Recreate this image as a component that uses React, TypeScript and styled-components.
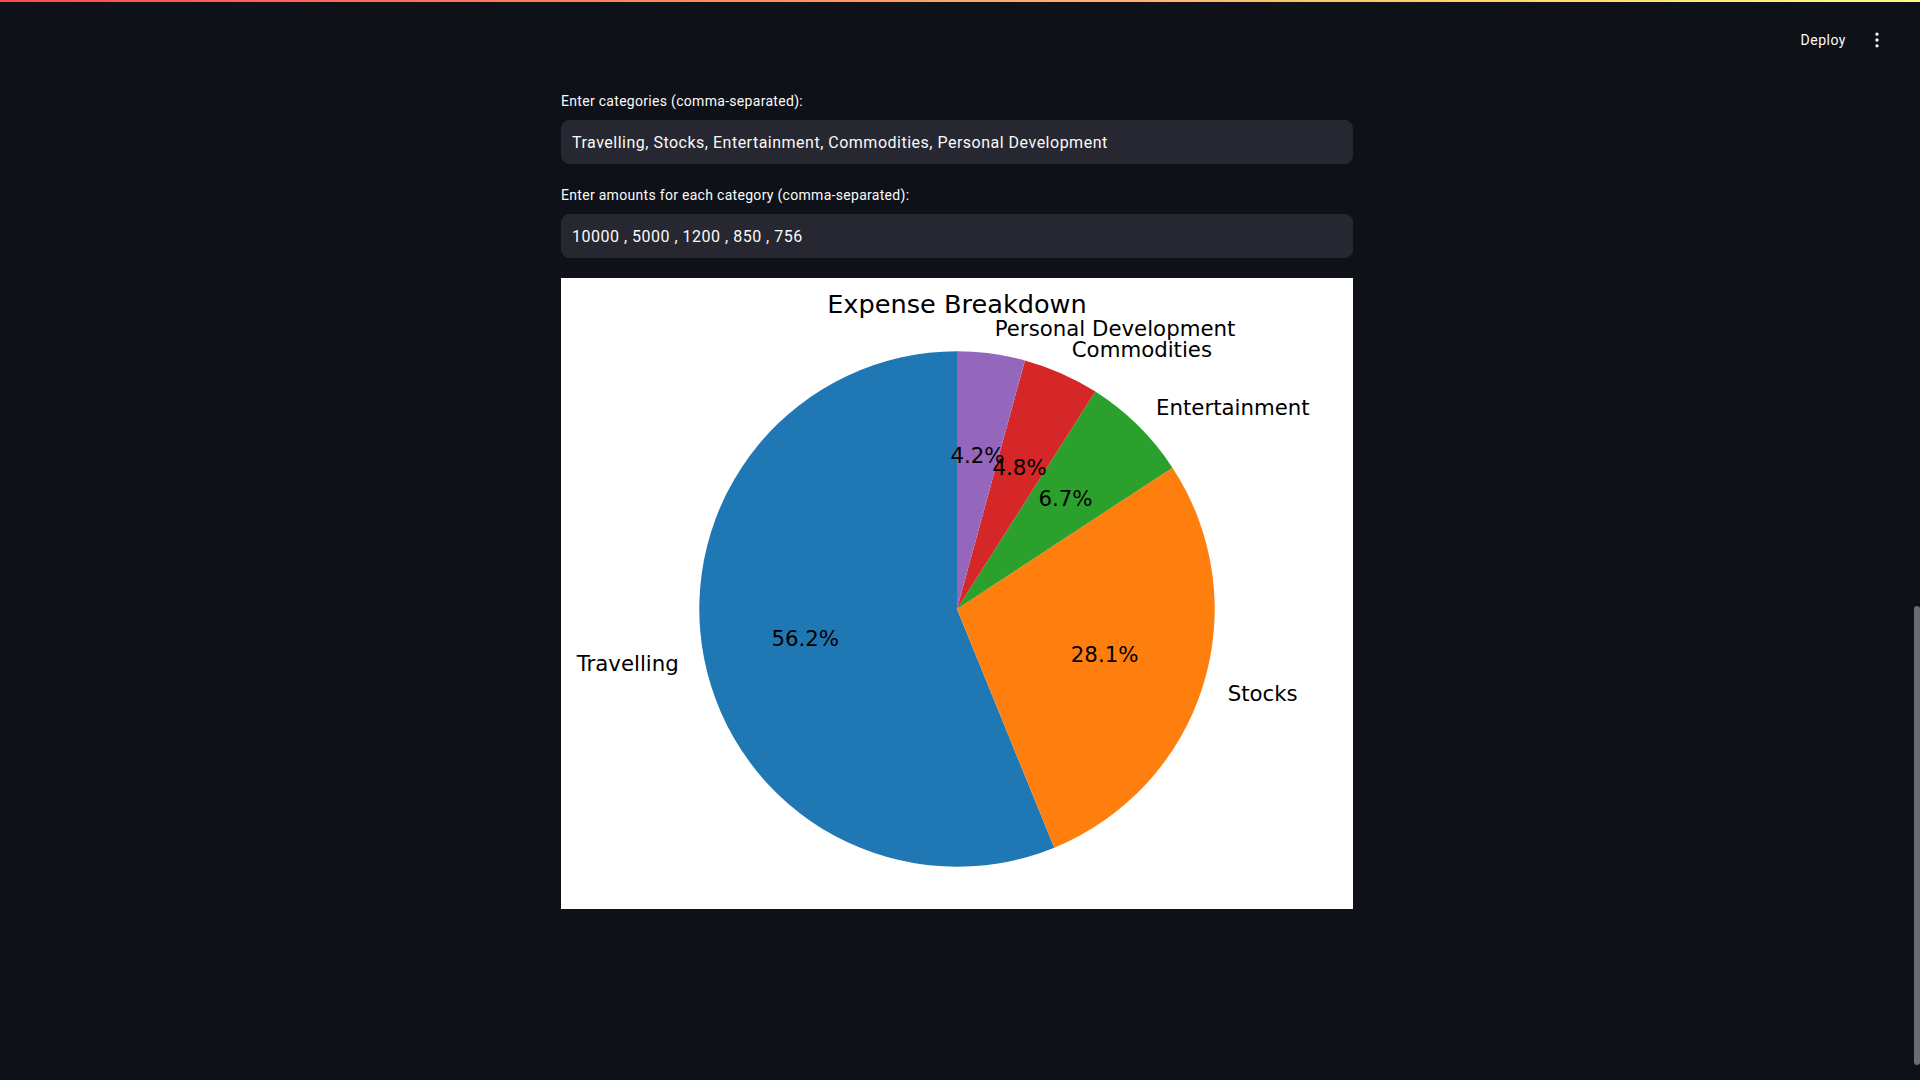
import React from "react";
import styled, { createGlobalStyle } from "styled-components";
import { EllipsisVertical } from "lucide-react";

const uiFont = `Roboto, "Noto Sans", sans-serif`;

const GlobalStyle = createGlobalStyle`
  html, body {
    margin: 0;
    padding: 0;
    background: #0e1117;
    overflow: hidden;
  }
  body {
    font-family: ${uiFont};
    color: #fafafa;
  }
  * { box-sizing: border-box; }
`;

const Shell = styled.div`
  display: flex;
  flex-direction: column;
  min-height: 100vh;
  background: #0e1117;
`;

const Decoration = styled.div`
  height: 2px;
  background: linear-gradient(90deg, #ff4b4b, #fffd80);
`;

const Header = styled.header`
  display: flex;
  justify-content: flex-end;
  align-items: center;
  gap: 21px;
  height: 76px;
  padding-right: 33px;
`;

const DeployButton = styled.button`
  background: transparent;
  border: none;
  padding: 0;
  color: #fafafa;
  font-family: ${uiFont};
  font-size: 14px;
  line-height: 20px;
  letter-spacing: 0.5px;
  cursor: pointer;
`;

const MenuButton = styled.button`
  display: flex;
  align-items: center;
  justify-content: center;
  background: transparent;
  border: none;
  padding: 0;
  color: #fafafa;
  width: 20px;
  height: 20px;
`;

const Main = styled.main`
  display: flex;
  justify-content: center;
  padding: 12px 6px 0 0;
`;

const Column = styled.div`
  width: 792px;
  display: flex;
  flex-direction: column;
  gap: 20px;
`;

const Field = styled.div`
  display: flex;
  flex-direction: column;
`;

const Label = styled.label`
  height: 22px;
  line-height: 22px;
  margin-bottom: 8px;
  font-family: ${uiFont};
  font-size: 14px;
  letter-spacing: 0.3px;
  color: #fafafa;
`;

const Input = styled.input`
  height: 44px;
  width: 100%;
  border: 1px solid #262730;
  border-radius: 8px;
  background: #262730;
  color: #fafafa;
  font-family: ${uiFont};
  font-size: 16px;
  letter-spacing: 0.5px;
  padding: 0 12px 0 10px;
  outline: none;
`;

const Figure = styled.div`
  width: 792px;
  height: 631px;
  background: #ffffff;
`;

const ScrollThumb = styled.div`
  position: fixed;
  right: 0;
  top: 606px;
  width: 6px;
  height: 459px;
  border-radius: 3px;
  background: #6b6c70;
`;

const data = [
  { label: "Travelling", value: 10000, color: "#1f77b4" },
  { label: "Stocks", value: 5000, color: "#ff7f0e" },
  { label: "Entertainment", value: 1200, color: "#2ca02c" },
  { label: "Commodities", value: 850, color: "#d62728" },
  { label: "Personal Development", value: 756, color: "#9467bd" },
];

const PieChart: React.FC = () => {
  const cx = 396;
  const cy = 331;
  const r = 257.7;
  const total = data.reduce((s, d) => s + d.value, 0);
  let angle = 90;
  const pt = (a: number, rr: number) => {
    const rad = (a * Math.PI) / 180;
    return [cx + rr * Math.cos(rad), cy - rr * Math.sin(rad)];
  };
  const slices = data.map((d) => {
    const sweep = (d.value / total) * 360;
    const a1 = angle;
    const a2 = angle + sweep;
    angle = a2;
    const [x1, y1] = pt(a1, r);
    const [x2, y2] = pt(a2, r);
    const large = sweep > 180 ? 1 : 0;
    const mid = (a1 + a2) / 2;
    const [lx, ly] = pt(mid, r * 1.1);
    const [px, py] = pt(mid, r * 0.6);
    const anchor = Math.cos((mid * Math.PI) / 180) >= 0 ? "start" : "end";
    return {
      ...d,
      path: `M ${cx} ${cy} L ${x1} ${y1} A ${r} ${r} 0 ${large} 0 ${x2} ${y2} Z`,
      lx,
      ly,
      px,
      py,
      anchor,
      pct: ((d.value / total) * 100).toFixed(1) + "%",
    };
  });
  return (
    <svg width="792" height="631" viewBox="0 0 792 631">
      <g>
        {slices.map((s) => (
          <path key={s.label} d={s.path} fill={s.color} />
        ))}
      </g>
      <g fontFamily="'DejaVu Sans', sans-serif" fill="#000" fontSize="21.3">
        {slices.map((s) => (
          <text
            key={s.label + "l"}
            x={s.lx}
            y={s.ly}
            textAnchor={s.anchor}
            dominantBaseline="central"
          >
            {s.label}
          </text>
        ))}
        {slices.map((s) => (
          <text
            key={s.label + "p"}
            x={s.px}
            y={s.py}
            textAnchor="middle"
            dominantBaseline="central"
          >
            {s.pct}
          </text>
        ))}
        <text x={396} y={26.2} textAnchor="middle" dominantBaseline="central" fontSize="25.6">
          Expense Breakdown
        </text>
      </g>
    </svg>
  );
};

export default function App() {
  return (
    <>
      <GlobalStyle />
      <Shell>
        <Decoration />
        <Header>
          <DeployButton>Deploy</DeployButton>
          <MenuButton aria-label="Main menu">
            <EllipsisVertical size={20} strokeWidth={2} />
          </MenuButton>
        </Header>
        <Main>
          <Column>
            <Field>
              <Label>Enter categories (comma-separated):</Label>
              <Input
                readOnly
                value="Travelling, Stocks, Entertainment, Commodities, Personal Development"
              />
            </Field>
            <Field>
              <Label>Enter amounts for each category (comma-separated):</Label>
              <Input readOnly value="10000 , 5000 , 1200 , 850 , 756" />
            </Field>
            <Figure>
              <PieChart />
            </Figure>
          </Column>
        </Main>
        <ScrollThumb />
      </Shell>
    </>
  );
}
